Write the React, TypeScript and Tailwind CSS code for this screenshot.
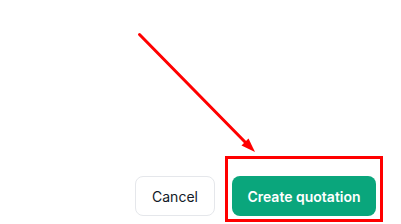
import React from 'react';

export default function App() {
    return (
        <div className="relative flex h-[224px] w-full flex-col justify-end bg-white font-['Inter',sans-serif]">
            {/* Footer actions */}
            <div className="flex items-center justify-end gap-[17px] pb-[8px] pr-[25px]">
                <button className="h-10 w-[80px] rounded-lg border border-[#e5e7eb] bg-white text-[14px] font-normal text-[#111827]">
                    Cancel
                </button>
                <button className="h-10 w-[144px] rounded-lg bg-[#0aa67c] text-[14px] font-semibold text-white">
                    Create quotation
                </button>
            </div>

            {/* Annotation overlay */}
            <div className="pointer-events-none absolute left-[225px] top-[156px] h-[66px] w-[158px] border-[3px] border-[#ff0000]" />
            <svg className="pointer-events-none absolute left-0 top-0" width="401" height="224">
                <line x1="139.5" y1="34.5" x2="247" y2="144" stroke="#ff0000" strokeWidth="3" strokeLinecap="round" />
                <polygon points="255,152 241.5,145.5 248.5,138.5" fill="#ff0000" />
            </svg>
        </div>
    );
}
